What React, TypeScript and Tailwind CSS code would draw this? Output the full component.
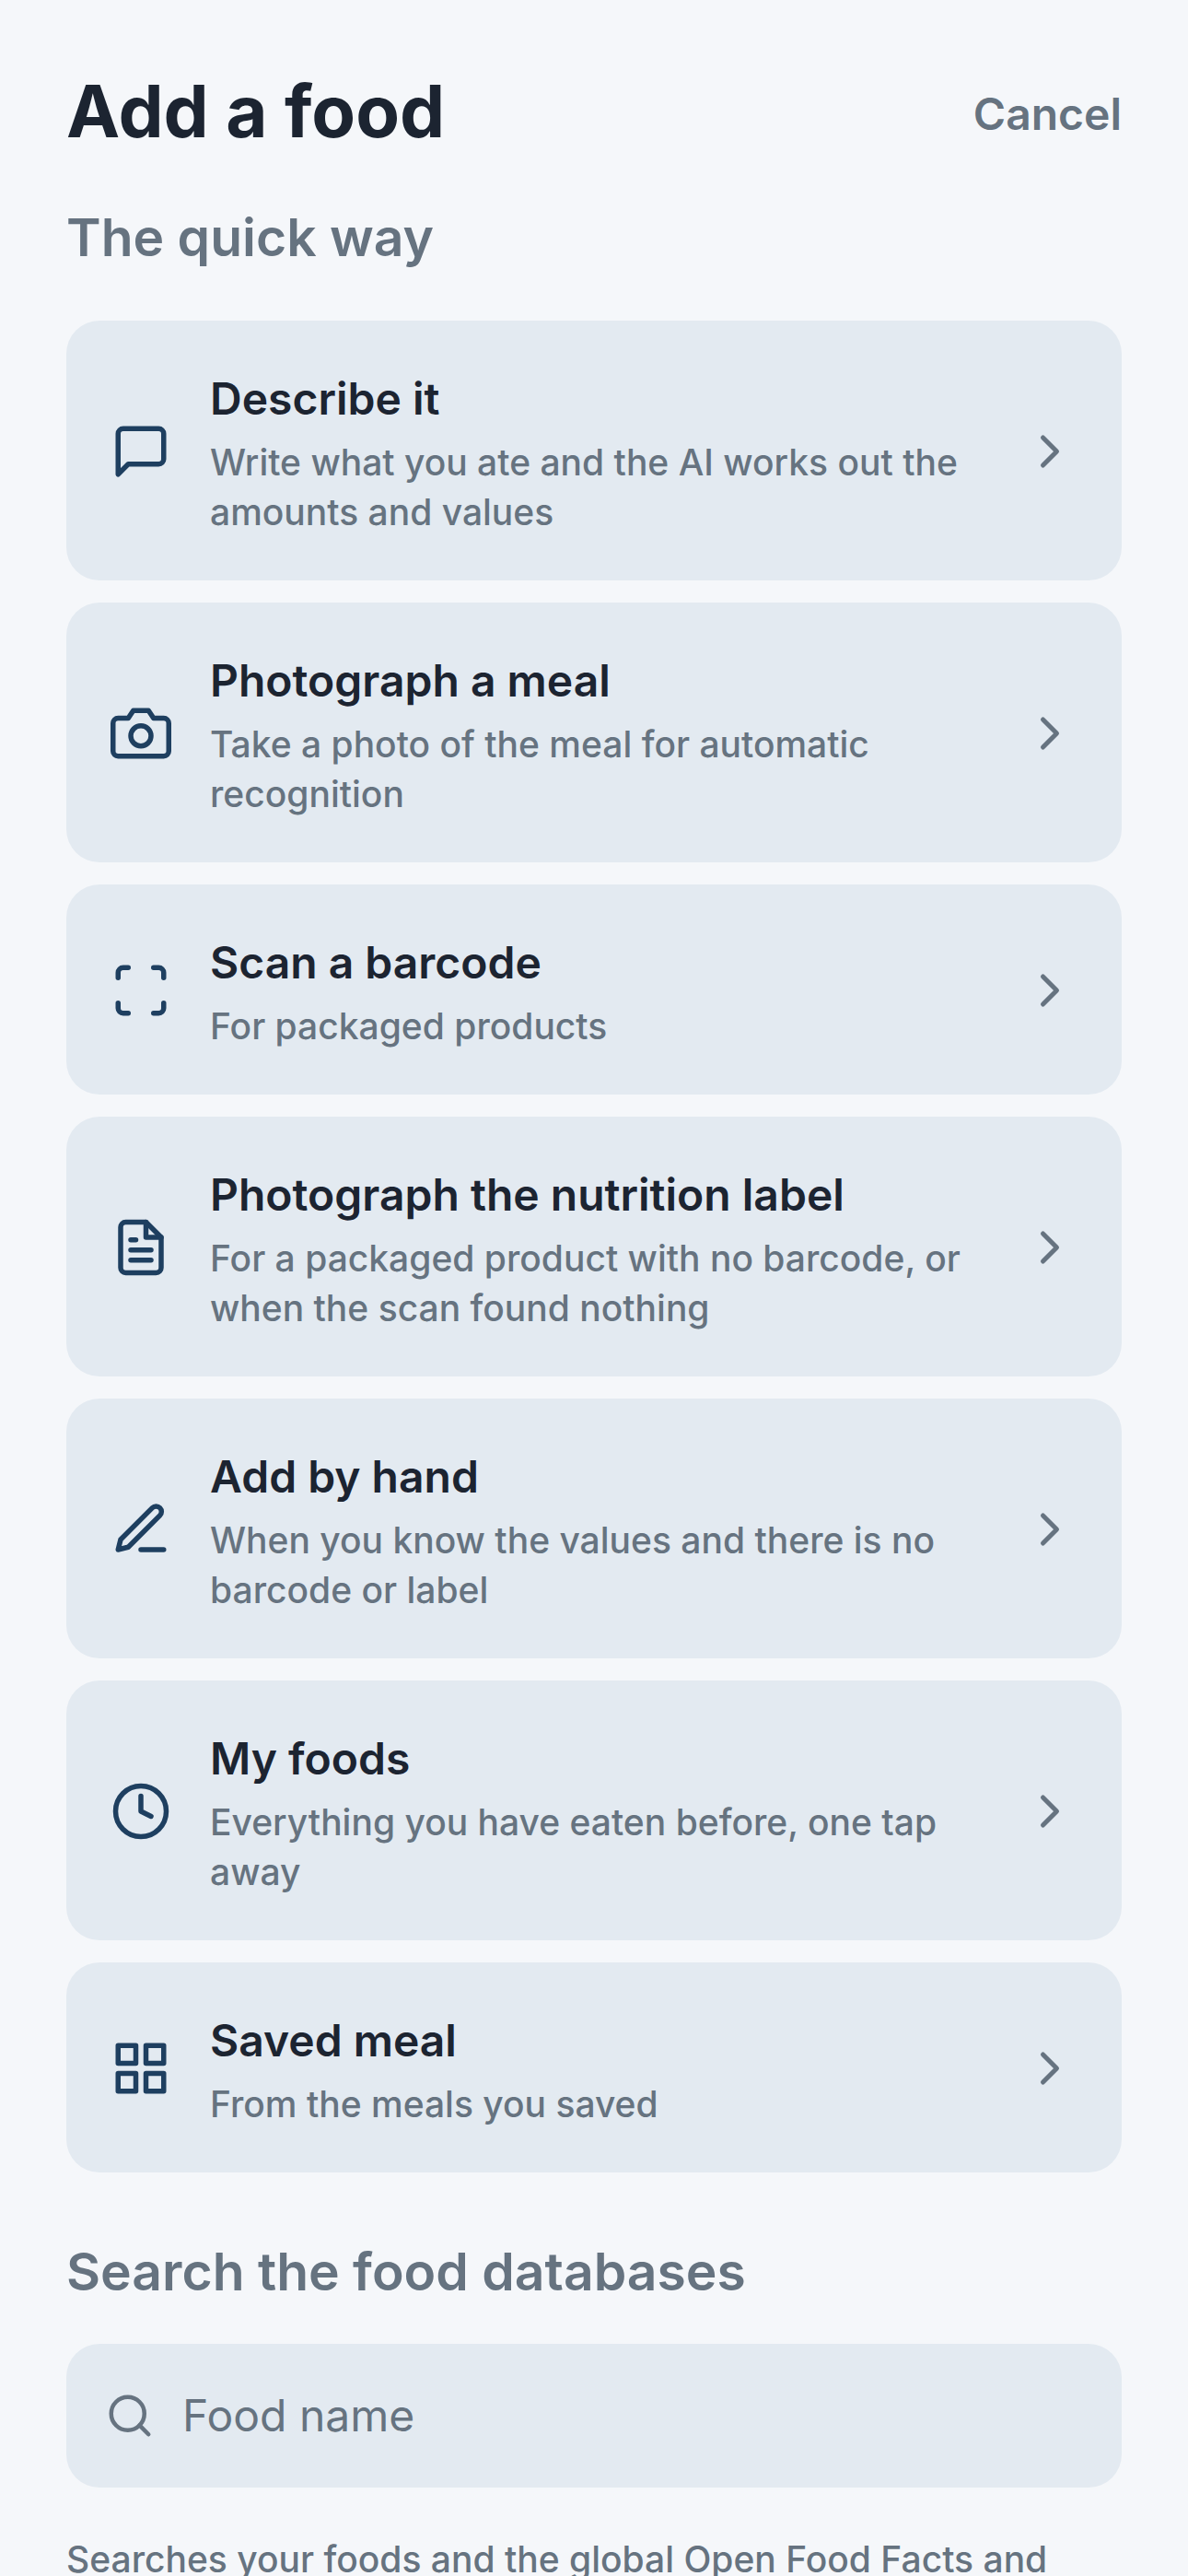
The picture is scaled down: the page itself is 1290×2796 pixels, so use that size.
import React from "react";
import { FiCamera, FiChevronRight, FiClock, FiEdit3, FiFileText, FiGrid, FiMessageSquare, FiSearch } from "react-icons/fi";
import { Scan } from "lucide-react";

const rows = [
  { icon: <FiMessageSquare size={66} />, title: "Describe it", sub: "Write what you ate and the AI works out the amounts and values" },
  { icon: <FiCamera size={66} />, title: "Photograph a meal", sub: "Take a photo of the meal for automatic recognition" },
  { icon: <Scan size={66} strokeWidth={2} />, title: "Scan a barcode", sub: "For packaged products" },
  { icon: <FiFileText size={66} />, title: "Photograph the nutrition label", sub: "For a packaged product with no barcode, or when the scan found nothing" },
  { icon: <FiEdit3 size={66} />, title: "Add by hand", sub: "When you know the values and there is no barcode or label" },
  { icon: <FiClock size={66} />, title: "My foods", sub: "Everything you have eaten before, one tap away" },
  { icon: <FiGrid size={66} />, title: "Saved meal", sub: "From the meals you saved" },
];

const Row = ({ icon, title, sub }: { icon: React.ReactNode; title: string; sub: string }) => {
  return (
    <div className="flex items-center gap-[42px] rounded-[36px] bg-[#e3eaf1] px-[48px] pt-[48px] pb-[47px]">
      <span className="shrink-0 text-[#1e3f60]">{icon}</span>
      <div className="flex-1">
        <div className="text-[48px] leading-[74px] font-semibold text-[#1c2431]">{title}</div>
        <div className="mt-[5px] text-[39px] leading-[54px] font-medium text-[#667380]">{sub}</div>
      </div>
      <FiChevronRight size={60} className="shrink-0 text-[#667380]" />
    </div>
  );
};

const App = () => {
  return (
    <div className="h-[2796px] overflow-hidden bg-[#f5f7fa] px-[72px] pt-[73px] font-['Inter',sans-serif]">
      {/* header */}
      <div className="flex items-center justify-between">
        <h1 className="text-[78px] leading-[96px] font-bold text-[#1c2431]">Add a food</h1>
        <button className="pt-[6px] text-[48px] font-semibold text-[#667380]">Cancel</button>
      </div>
      <h2 className="mt-[53px] text-[57px] leading-[72px] font-semibold text-[#667380]">The quick way</h2>

      <div className="mt-[54px] flex flex-col gap-[24px]">
        {rows.map((r) => (
          <Row key={r.title} {...r} />
        ))}
      </div>

      <h2 className="mt-[72px] text-[57px] leading-[72px] font-semibold text-[#667380]">Search the food databases</h2>
      <div className="mt-[42px] flex h-[156px] items-center gap-[30px] rounded-[36px] bg-[#e3eaf1] px-[42px]">
        <FiSearch size={54} className="shrink-0 text-[#667380]" />
        <span className="text-[48px] text-[#667380]">Food name</span>
      </div>
      <p className="mt-[51px] text-[39px] leading-[54px] font-medium text-[#667380]">
        Searches your foods and the global Open Food Facts and USDA databases.
      </p>
    </div>
  );
};

export default App;
